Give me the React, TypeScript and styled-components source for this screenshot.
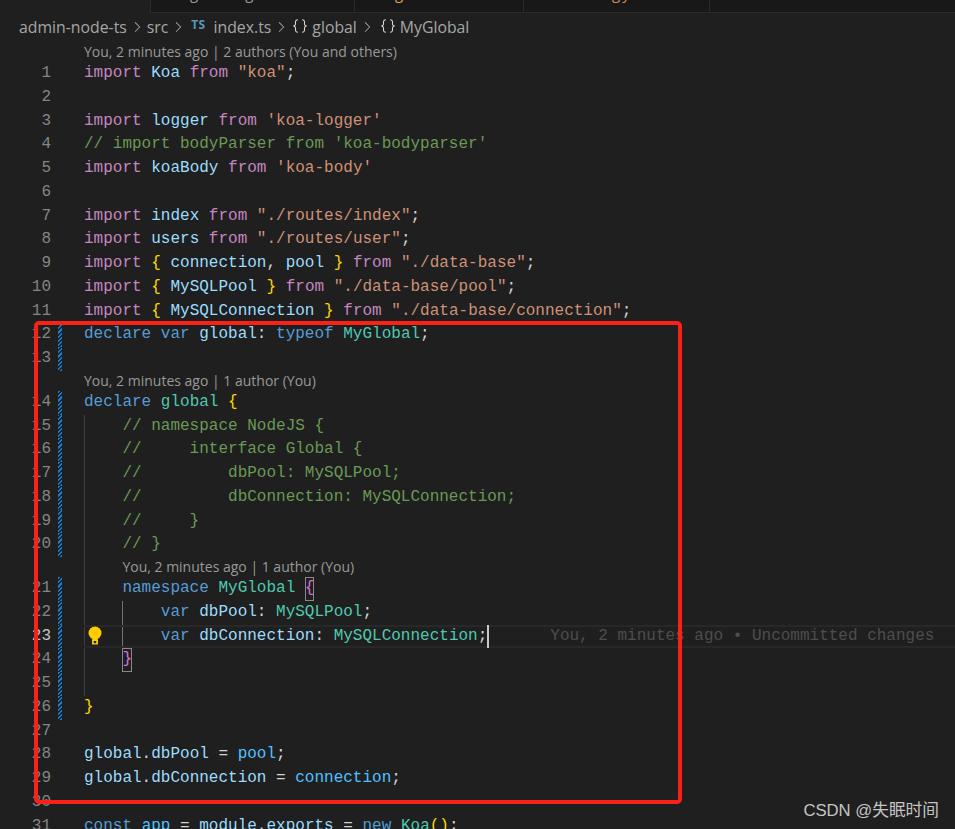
import React from "react";
import styled, { createGlobalStyle } from "styled-components";
import { VscChevronRight, VscSymbolNamespace } from "react-icons/vsc";

const GlobalStyle = createGlobalStyle`
  html, body {
    margin: 0;
    padding: 0;
    background: #1f1f1f;
  }
`;

const colors: Record<string, string> = {
  kw: "#c586c0",
  key: "#569cd6",
  v: "#9cdcfe",
  c: "#4fc1ff",
  t: "#4ec9b0",
  s: "#ce9178",
  cm: "#6a9955",
  p: "#d4d4d4",
  y: "#ffd700",
  m: "#da70d6",
};

const Page = styled.div`
  position: relative;
  width: 955px;
  height: 829px;
  overflow: hidden;
  background: #1f1f1f;
`;

const TabStrip = styled.div`
  display: flex;
  height: 12px;
  margin-left: 150px;
  background: #181818;
  border-left: 1px solid #2b2b2b;
  border-bottom: 1px solid #2b2b2b;
  overflow: hidden;
`;

const Tab = styled.div<{ $width: number; $pad: number; $gap: number; $color: string }>`
  display: flex;
  gap: ${(p) => p.$gap}px;
  flex: 0 0 ${(p) => p.$width}px;
  box-sizing: border-box;
  padding-left: ${(p) => p.$pad}px;
  border-right: 1px solid #2b2b2b;
  color: ${(p) => p.$color};
  font: 15px/16px "Open Sans", sans-serif;
  overflow: hidden;
  span {
    margin-top: -15px;
  }
`;

const Breadcrumb = styled.div`
  display: flex;
  align-items: center;
  height: 27px;
  padding: 0 0 2px 19px;
  color: #a6a6a6;
  font: 15.8px "Open Sans", sans-serif;
  white-space: nowrap;
`;

const Chevron = styled(VscChevronRight)`
  width: 16px;
  height: 16px;
  margin: 0 2px;
  color: #a6a6a6;
`;

const TsIcon = styled.span`
  margin: 0 8px 4px 3px;
  color: #519aba;
  font: bold 12px "Open Sans", sans-serif;
  letter-spacing: 0.3px;
`;

const NsIcon = styled(VscSymbolNamespace)<{ $left: number }>`
  width: 18px;
  height: 18px;
  margin: 0 3px 2px ${(p) => p.$left}px;
  color: #d8d8d8;
`;

const Editor = styled.div`
  display: flex;
  flex-direction: column;
`;

const Row = styled.div`
  display: grid;
  grid-template-columns: 51px 33px 1fr;
  height: 23.75px;
  line-height: 23.75px;
  font-family: "Liberation Mono", monospace;
  font-size: 16px;
  white-space: pre;
`;

const LensRow = styled(Row)`
  height: 20px;
  line-height: 20px;
`;

const LineNo = styled.div<{ $active?: boolean }>`
  text-align: right;
  color: ${(p) => (p.$active ? "#c6c6c6" : "#858585")};
`;

const Gutter = styled.div<{ $changed?: boolean }>`
  ${(p) =>
    p.$changed
      ? `
    width: 4px;
    margin-left: 7px;
    background: repeating-linear-gradient(-45deg, #0f7fd6 0 1.5px, #1f1f1f 1.5px 3px);
  `
      : ""}
`;

const guideBg = (guides?: number) => {
  if (!guides) return "none";
  const layers = ["linear-gradient(#404040, #404040) 0 0 / 1px 100% no-repeat"];
  if (guides > 1) layers.push("linear-gradient(#707070, #707070) 38.4px 0 / 1px 100% no-repeat");
  return layers.join(", ");
};

const Code = styled.div<{ $guides?: number; $active?: boolean }>`
  position: relative;
  min-width: 0;
  background: ${(p) => guideBg(p.$guides)};
  box-shadow: ${(p) => (p.$active ? "inset 0 2px 0 #282828, inset 0 -2px 0 #282828" : "none")};
`;

const Token = styled.span<{ $kind: string }>`
  color: ${(p) => colors[p.$kind]};
`;

const MatchBracket = styled.span`
  display: inline-block;
  height: 23.75px;
  vertical-align: top;
  color: ${colors.m};
  box-shadow: inset 0 0 0 1px #888888;
`;

const Caret = styled.span`
  display: inline-block;
  width: 2px;
  height: 23px;
  margin-right: -2px;
  vertical-align: top;
  background: #c8c8c8;
`;

const Ghost = styled.span`
  margin-left: 63px;
  color: #4d4d4d;
`;

const Bulb = styled.svg`
  position: absolute;
  left: 3px;
  top: 1px;
  width: 16px;
  height: 20px;
`;

const Lens = styled.div<{ $indent?: number }>`
  margin-left: ${(p) => (p.$indent || 0) * 9.6}px;
  color: #999999;
  font: 14px/20px "Open Sans", sans-serif;
`;

const LensCode = styled(Code)`
  height: 20px;
`;

const Annotation = styled.div`
  position: absolute;
  left: 34px;
  top: 321px;
  width: 648px;
  height: 483px;
  box-sizing: border-box;
  border: 4px solid #fb2116;
  border-radius: 5px;
  pointer-events: none;
`;

const Watermark = styled.div`
  position: absolute;
  right: 16px;
  top: 800px;
  color: #c4c4c4;
  font: 16.7px/22px "Liberation Sans", "Noto Sans CJK SC", sans-serif;
`;

type Tok = [string, string];
type Line = {
  n?: number;
  lens?: string;
  indent?: number;
  toks?: Tok[];
  changed?: boolean;
  guides?: number;
  special?: "match-open" | "match-close" | "active";
};

const imp = (name: string, q: string): Tok[] => [
  ["kw", "import"], ["p", " "], ["v", name], ["p", " "], ["kw", "from"], ["p", " "], ["s", q],
];
const impBraces = (names: Tok[], q: string): Tok[] => [
  ["kw", "import"], ["p", " "], ["y", "{"], ["p", " "], ...names, ["p", " "], ["y", "}"], ["p", " "],
  ["kw", "from"], ["p", " "], ["s", q], ["p", ";"],
];

const lines: Line[] = [
  { lens: "You, 2 minutes ago | 2 authors (You and others)" },
  { n: 1, toks: [...imp("Koa", '"koa"'), ["p", ";"]] },
  { n: 2 },
  { n: 3, toks: imp("logger", "'koa-logger'") },
  { n: 4, toks: [["cm", "// import bodyParser from 'koa-bodyparser'"]] },
  { n: 5, toks: imp("koaBody", "'koa-body'") },
  { n: 6 },
  { n: 7, toks: [...imp("index", '"./routes/index"'), ["p", ";"]] },
  { n: 8, toks: [...imp("users", '"./routes/user"'), ["p", ";"]] },
  { n: 9, toks: impBraces([["v", "connection"], ["p", ", "], ["v", "pool"]], '"./data-base"') },
  { n: 10, toks: impBraces([["v", "MySQLPool"]], '"./data-base/pool"') },
  { n: 11, toks: impBraces([["v", "MySQLConnection"]], '"./data-base/connection"') },
  {
    n: 12,
    changed: true,
    toks: [["key", "declare var"], ["p", " "], ["v", "global"], ["p", ": "], ["key", "typeof"], ["p", " "], ["t", "MyGlobal"], ["p", ";"]],
  },
  { n: 13, changed: true },
  { lens: "You, 2 minutes ago | 1 author (You)" },
  { n: 14, changed: true, toks: [["key", "declare"], ["p", " "], ["t", "global"], ["p", " "], ["y", "{"]] },
  { n: 15, changed: true, guides: 1, toks: [["cm", "    // namespace NodeJS {"]] },
  { n: 16, changed: true, guides: 1, toks: [["cm", "    //     interface Global {"]] },
  { n: 17, changed: true, guides: 1, toks: [["cm", "    //         dbPool: MySQLPool;"]] },
  { n: 18, changed: true, guides: 1, toks: [["cm", "    //         dbConnection: MySQLConnection;"]] },
  { n: 19, changed: true, guides: 1, toks: [["cm", "    //     }"]] },
  { n: 20, changed: true, guides: 1, toks: [["cm", "    // }"]] },
  { lens: "You, 2 minutes ago | 1 author (You)", indent: 4, guides: 1 },
  {
    n: 21,
    changed: true,
    guides: 1,
    special: "match-open",
    toks: [["key", "    namespace"], ["p", " "], ["t", "MyGlobal"], ["p", " "]],
  },
  {
    n: 22,
    changed: true,
    guides: 2,
    toks: [["key", "        var"], ["p", " "], ["v", "dbPool"], ["p", ": "], ["t", "MySQLPool"], ["p", ";"]],
  },
  {
    n: 23,
    changed: true,
    guides: 2,
    special: "active",
    toks: [["key", "        var"], ["p", " "], ["v", "dbConnection"], ["p", ": "], ["t", "MySQLConnection"], ["p", ";"]],
  },
  { n: 24, changed: true, guides: 1, special: "match-close", toks: [["p", "    "]] },
  { n: 25, changed: true, guides: 1 },
  { n: 26, changed: true, toks: [["y", "}"]] },
  { n: 27 },
  { n: 28, toks: [["v", "global"], ["p", "."], ["v", "dbPool"], ["p", " = "], ["c", "pool"], ["p", ";"]] },
  { n: 29, toks: [["v", "global"], ["p", "."], ["v", "dbConnection"], ["p", " = "], ["c", "connection"], ["p", ";"]] },
  { n: 30 },
  {
    n: 31,
    toks: [
      ["key", "const"], ["p", " "], ["c", "app"], ["p", " = "], ["v", "module"], ["p", "."], ["v", "exports"], ["p", " = "],
      ["key", "new"], ["p", " "], ["t", "Koa"], ["y", "()"], ["p", ";"],
    ],
  },
];

const Toks = ({ toks }: { toks?: Tok[] }) => (
  <>
    {(toks || []).map(([kind, text], i) => (
      <Token key={i} $kind={kind}>
        {text}
      </Token>
    ))}
  </>
);

const LightBulb = () => (
  <Bulb viewBox="0 0 16 20">
    <circle cx="8" cy="7" r="6.5" fill="#ffcc00" />
    <path d="M4.5 11h7l-1 3h-5z" fill="#ffcc00" />
    <rect x="5" y="13.5" width="6" height="5" fill="#ffcc00" />
    <rect x="6.8" y="15" width="2.4" height="2.2" fill="#1f1f1f" />
  </Bulb>
);

const App = () => {
  return (
    <Page>
      <GlobalStyle />
      <TabStrip>
        <Tab $width={204} $pad={39} $gap={47} $color="#9a9a9a">
          <span>g</span>
          <span>g</span>
        </Tab>
        <Tab $width={169} $pad={40} $gap={0} $color="#d7a25f">
          <span>g</span>
        </Tab>
        <Tab $width={186} $pad={88} $gap={2} $color="#d78a4f">
          <span>g</span>
          <span>y</span>
        </Tab>
      </TabStrip>
      <Breadcrumb>
        admin-node-ts
        <Chevron />
        src
        <Chevron />
        <TsIcon>TS</TsIcon>
        index.ts
        <Chevron />
        <NsIcon $left={0} />
        global
        <Chevron />
        <NsIcon $left={2} />
        MyGlobal
      </Breadcrumb>
      <Editor>
        {lines.map((line, i) =>
          line.lens ? (
            <LensRow key={i}>
              <LineNo />
              <Gutter />
              <LensCode $guides={line.guides}>
                <Lens $indent={line.indent}>{line.lens}</Lens>
              </LensCode>
            </LensRow>
          ) : (
            <Row key={i}>
              <LineNo $active={line.special === "active"}>{line.n}</LineNo>
              <Gutter $changed={line.changed} />
              <Code $guides={line.guides} $active={line.special === "active"}>
                <Toks toks={line.toks} />
                {line.special === "match-open" && <MatchBracket>{"{"}</MatchBracket>}
                {line.special === "match-close" && <MatchBracket>{"}"}</MatchBracket>}
                {line.special === "active" && (
                  <>
                    <LightBulb />
                    <Caret />
                    <Ghost>You, 2 minutes ago • Uncommitted changes</Ghost>
                  </>
                )}
              </Code>
            </Row>
          )
        )}
      </Editor>
      <Annotation />
      <Watermark>CSDN @失眠时间</Watermark>
    </Page>
  );
};

export default App;
